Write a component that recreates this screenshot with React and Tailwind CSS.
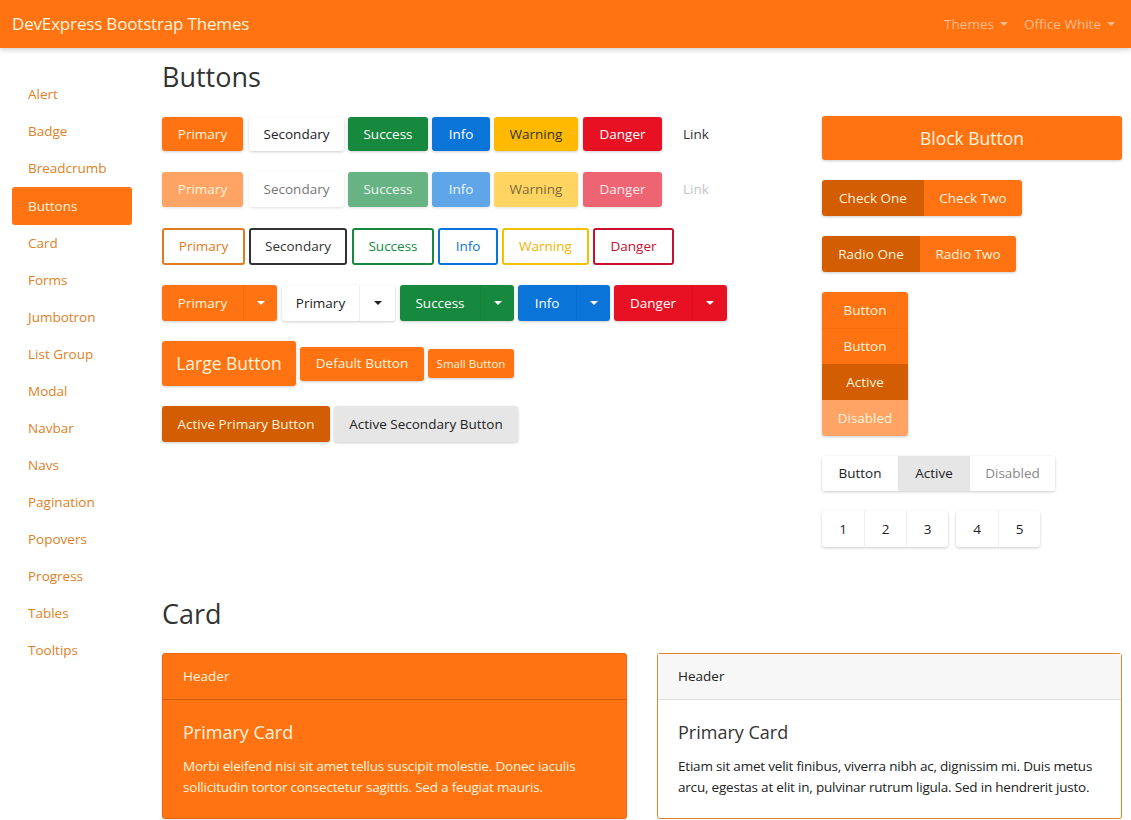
import React from 'react';

const navItems = ['Alert', 'Badge', 'Breadcrumb', 'Buttons', 'Card', 'Forms', 'Jumbotron', 'List Group', 'Modal', 'Navbar', 'Navs', 'Pagination', 'Popovers', 'Progress', 'Tables', 'Tooltips'];

const Caret = ({ dark }) => (
    <span className={dark ? "inline-block w-0 h-0 border-l-[4px] border-r-[4px] border-t-[4px] border-l-transparent border-r-transparent border-t-[#222]" : "inline-block w-0 h-0 border-l-[4px] border-r-[4px] border-t-[4px] border-l-transparent border-r-transparent border-t-white"} />
);

const App = () => {
    return (
        <div className="min-h-screen bg-white text-[#333] text-[14px]" style={{ fontFamily: '"Open Sans", "Noto Sans", sans-serif' }}>
            {/* Navbar */}
            <nav className="h-12 bg-[#ff7312] flex items-center justify-between pl-3 pr-4 shadow-[0_2px_5px_rgba(0,0,0,0.18)] relative z-10">
                <span className="text-[17px] text-[#fff3dc] tracking-[-0.01em]">DevExpress Bootstrap Themes</span>
                <div className="flex items-center gap-[16px] text-[13.5px] text-[#ffbd8c]">
                    <span className="flex items-center gap-[6px]">Themes <span className="inline-block w-0 h-0 border-l-[4px] border-r-[4px] border-t-[4px] border-l-transparent border-r-transparent border-t-[#ffbd8c]" /></span>
                    <span className="flex items-center gap-[6px]">Office White <span className="inline-block w-0 h-0 border-l-[4px] border-r-[4px] border-t-[4px] border-l-transparent border-r-transparent border-t-[#ffbd8c]" /></span>
                </div>
            </nav>

            <div className="flex">
                {/* Sidebar */}
                <aside className="w-[162px] pl-3 pt-[28px] shrink-0">
                    <ul className="w-[120px]">
                        {navItems.map(item => (
                            <li key={item} className={item === 'Buttons' ? "h-[38px] flex items-center px-4 rounded-[3px] bg-[#ff7312] text-[#fff3dc] text-[13.5px]" : "h-[37px] flex items-center px-4 text-[#e0801f] text-[13.5px]"}>{item}</li>
                        ))}
                    </ul>
                </aside>

                {/* Main */}
                <main className="flex-1 pr-[9px] pt-[12px] min-w-0">
                    <h2 className="text-[27px] leading-[34px] text-[#333]">Buttons</h2>

                    <div className="flex items-start">
                        {/* Left column */}
                        <div className="flex-1 text-[13.5px]">
                            <div className="flex items-center h-[34px] mt-[23px]">
                                <button className="w-[81px] h-full rounded-[3px] bg-[#ff7312] text-[#fff3dc] shadow-[0_1px_3px_rgba(0,0,0,0.2)]">Primary</button>
                                <button className="ml-[6px] w-[95px] h-full rounded-[3px] bg-white text-[#222] shadow-[0_1px_3px_rgba(0,0,0,0.2)]">Secondary</button>
                                <button className="ml-[4px] w-[80px] h-full rounded-[3px] bg-[#16893e] text-white shadow-[0_1px_3px_rgba(0,0,0,0.2)]">Success</button>
                                <button className="ml-[4px] w-[58px] h-full rounded-[3px] bg-[#0b74d8] text-white shadow-[0_1px_3px_rgba(0,0,0,0.2)]">Info</button>
                                <button className="ml-[4px] w-[84px] h-full rounded-[3px] bg-[#ffb900] text-[#333] shadow-[0_1px_3px_rgba(0,0,0,0.2)]">Warning</button>
                                <button className="ml-[5px] w-[79px] h-full rounded-[3px] bg-[#e81123] text-white shadow-[0_1px_3px_rgba(0,0,0,0.2)]">Danger</button>
                                <button className="ml-[4px] w-[60px] h-full text-[#333]">Link</button>
                            </div>

                            <div className="flex items-center h-[35px] mt-[21px]">
                                <button className="w-[81px] h-full rounded-[3px] bg-[#ffa465] text-[#fff3dc] shadow-[0_1px_3px_rgba(0,0,0,0.12)]">Primary</button>
                                <button className="ml-[6px] w-[95px] h-full rounded-[3px] bg-white text-[#777] shadow-[0_1px_3px_rgba(0,0,0,0.12)]">Secondary</button>
                                <button className="ml-[4px] w-[80px] h-full rounded-[3px] bg-[#67b383] text-[#f0f8f2] shadow-[0_1px_3px_rgba(0,0,0,0.12)]">Success</button>
                                <button className="ml-[4px] w-[58px] h-full rounded-[3px] bg-[#5ea6e8] text-[#f0f6fc] shadow-[0_1px_3px_rgba(0,0,0,0.12)]">Info</button>
                                <button className="ml-[4px] w-[84px] h-full rounded-[3px] bg-[#ffd460] text-[#7a6a40] shadow-[0_1px_3px_rgba(0,0,0,0.12)]">Warning</button>
                                <button className="ml-[5px] w-[79px] h-full rounded-[3px] bg-[#ef6473] text-[#fde8ea] shadow-[0_1px_3px_rgba(0,0,0,0.12)]">Danger</button>
                                <button className="ml-[4px] w-[60px] h-full text-[#c4c4c4]">Link</button>
                            </div>

                            <div className="flex items-center h-[37px] mt-[21px]">
                                <button className="w-[83px] h-full rounded-[3px] border-2 border-[#e07b22] text-[#e07b22] bg-white">Primary</button>
                                <button className="ml-[4px] w-[98px] h-full rounded-[3px] border-2 border-[#333] text-[#333] bg-white">Secondary</button>
                                <button className="ml-[5px] w-[82px] h-full rounded-[3px] border-2 border-[#16893e] text-[#16893e] bg-white">Success</button>
                                <button className="ml-[4px] w-[60px] h-full rounded-[3px] border-2 border-[#0b74d8] text-[#0b74d8] bg-white">Info</button>
                                <button className="ml-[4px] w-[87px] h-full rounded-[3px] border-2 border-[#f2c200] text-[#f0b400] bg-white">Warning</button>
                                <button className="ml-[4px] w-[81px] h-full rounded-[3px] border-2 border-[#c8102e] text-[#c8102e] bg-white">Danger</button>
                            </div>

                            <div className="flex items-center h-[36px] mt-[20px]">
                                <div className="flex h-full rounded-[3px] shadow-[0_1px_3px_rgba(0,0,0,0.2)] bg-[#ff7312] text-[#fff3dc]">
                                    <button className="w-[81px] h-full">Primary</button>
                                    <button className="w-[34px] h-full flex items-center justify-center border-l border-[rgba(0,0,0,0.06)]"><Caret /></button>
                                </div>
                                <div className="ml-[5px] flex h-full rounded-[3px] shadow-[0_1px_3px_rgba(0,0,0,0.2)] bg-white text-[#222]">
                                    <button className="w-[77px] h-full">Primary</button>
                                    <button className="w-[36px] h-full flex items-center justify-center border-l border-[#eee]"><Caret dark /></button>
                                </div>
                                <div className="ml-[5px] flex h-full rounded-[3px] shadow-[0_1px_3px_rgba(0,0,0,0.2)] bg-[#16893e] text-white">
                                    <button className="w-[80px] h-full">Success</button>
                                    <button className="w-[34px] h-full flex items-center justify-center border-l border-[rgba(0,0,0,0.06)]"><Caret /></button>
                                </div>
                                <div className="ml-[4px] flex h-full rounded-[3px] shadow-[0_1px_3px_rgba(0,0,0,0.2)] bg-[#0b74d8] text-white">
                                    <button className="w-[58px] h-full">Info</button>
                                    <button className="w-[34px] h-full flex items-center justify-center border-l border-[rgba(0,0,0,0.06)]"><Caret /></button>
                                </div>
                                <div className="ml-[4px] flex h-full rounded-[3px] shadow-[0_1px_3px_rgba(0,0,0,0.2)] bg-[#e81123] text-white">
                                    <button className="w-[78px] h-full">Danger</button>
                                    <button className="w-[35px] h-full flex items-center justify-center border-l border-[rgba(0,0,0,0.06)]"><Caret /></button>
                                </div>
                            </div>

                            <div className="flex items-center h-[45px] mt-[20px]">
                                <button className="w-[134px] h-[45px] rounded-[3px] bg-[#ff7312] text-[#fff3dc] text-[17.5px] shadow-[0_1px_3px_rgba(0,0,0,0.2)]">Large Button</button>
                                <button className="ml-[4px] w-[124px] h-[34px] rounded-[3px] bg-[#ff7312] text-[#fff3dc] shadow-[0_1px_3px_rgba(0,0,0,0.2)]">Default Button</button>
                                <button className="ml-[4px] w-[86px] h-[29px] rounded-[3px] bg-[#ff7312] text-[#fff3dc] text-[11.5px] shadow-[0_1px_3px_rgba(0,0,0,0.2)]">Small Button</button>
                            </div>

                            <div className="flex items-center h-[36px] mt-[20px]">
                                <button className="w-[168px] h-full rounded-[3px] bg-[#d35d02] text-[#fff3dc] shadow-[0_1px_3px_rgba(0,0,0,0.2)]">Active Primary Button</button>
                                <button className="ml-[4px] w-[184px] h-full rounded-[3px] bg-[#e6e6e6] text-[#222] shadow-[0_1px_3px_rgba(0,0,0,0.2)]">Active Secondary Button</button>
                            </div>
                        </div>

                        {/* Right column */}
                        <div className="w-[300px] text-[13.5px]">
                            <button className="mt-[22px] w-full h-[44px] rounded-[3px] bg-[#ff7312] text-[#fff3dc] text-[17.5px] shadow-[0_1px_3px_rgba(0,0,0,0.2)]">Block Button</button>

                            <div className="mt-[20px] flex h-[36px] w-max rounded-[3px] overflow-hidden shadow-[0_1px_3px_rgba(0,0,0,0.2)] text-[#fff3dc]">
                                <button className="w-[102px] h-full bg-[#d35d02]">Check One</button>
                                <button className="w-[98px] h-full bg-[#ff7312]">Check Two</button>
                            </div>

                            <div className="mt-[20px] flex h-[36px] w-max rounded-[3px] overflow-hidden shadow-[0_1px_3px_rgba(0,0,0,0.2)] text-[#fff3dc]">
                                <button className="w-[98px] h-full bg-[#d35d02]">Radio One</button>
                                <button className="w-[96px] h-full bg-[#ff7312]">Radio Two</button>
                            </div>

                            <div className="mt-[20px] flex flex-col w-[86px] rounded-[3px] overflow-hidden shadow-[0_1px_3px_rgba(0,0,0,0.2)] text-[#fff3dc]">
                                <button className="h-[36px] bg-[#ff7312]">Button</button>
                                <button className="h-[36px] bg-[#ff7312] border-t border-[rgba(0,0,0,0.04)]">Button</button>
                                <button className="h-[36px] bg-[#d35d02]">Active</button>
                                <button className="h-[36px] bg-[#ffa465]">Disabled</button>
                            </div>

                            <div className="mt-[20px] flex h-[35px] w-max rounded-[3px] overflow-hidden shadow-[0_1px_3px_rgba(0,0,0,0.2)]">
                                <button className="w-[76px] h-full bg-white text-[#222]">Button</button>
                                <button className="w-[72px] h-full bg-[#e6e6e6] text-[#222]">Active</button>
                                <button className="w-[85px] h-full bg-white text-[#888]">Disabled</button>
                            </div>

                            <div className="mt-[20px] flex h-[36px] gap-[8px]">
                                <div className="flex h-full rounded-[3px] overflow-hidden shadow-[0_1px_3px_rgba(0,0,0,0.2)] bg-white text-[#222]">
                                    <button className="w-[42px] h-full">1</button>
                                    <button className="w-[42px] h-full border-l border-[#eee]">2</button>
                                    <button className="w-[42px] h-full border-l border-[#eee]">3</button>
                                </div>
                                <div className="flex h-full rounded-[3px] overflow-hidden shadow-[0_1px_3px_rgba(0,0,0,0.2)] bg-white text-[#222]">
                                    <button className="w-[42px] h-full">4</button>
                                    <button className="w-[42px] h-full border-l border-[#eee]">5</button>
                                </div>
                            </div>
                        </div>
                    </div>

                    {/* Card section */}
                    <h2 className="mt-[50px] text-[27px] leading-[34px] text-[#333]">Card</h2>
                    <div className="mt-[22px] grid grid-cols-2 gap-[30px]">
                        <div className="rounded-[3px] bg-[#ff7312] text-[#fff3dc] border border-[#e8690f] shadow-[0_1px_3px_rgba(0,0,0,0.15)]">
                            <div className="h-[46px] px-5 flex items-center border-b border-[rgba(0,0,0,0.18)] text-[13.5px]">Header</div>
                            <div className="p-5">
                                <h5 className="text-[18px] leading-[24px]">Primary Card</h5>
                                <p className="mt-3 text-[13.5px] leading-[21px] tracking-[-0.015em]">Morbi eleifend nisi sit amet tellus suscipit molestie. Donec iaculis sollicitudin tortor consectetur sagittis. Sed a feugiat mauris.</p>
                            </div>
                        </div>
                        <div className="rounded-[3px] bg-white text-[#222] border border-[#e2862c]">
                            <div className="h-[46px] px-5 flex items-center bg-[#f7f7f7] border-b border-[#dedede] text-[13.5px]">Header</div>
                            <div className="p-5">
                                <h5 className="text-[18px] leading-[24px] text-[#333]">Primary Card</h5>
                                <p className="mt-3 text-[13.5px] leading-[21px] tracking-[-0.015em]">Etiam sit amet velit finibus, viverra nibh ac, dignissim mi. Duis metus arcu, egestas at elit in, pulvinar rutrum ligula. Sed in hendrerit justo.</p>
                            </div>
                        </div>
                    </div>
                </main>
            </div>
        </div>
    );
};

export default App;
